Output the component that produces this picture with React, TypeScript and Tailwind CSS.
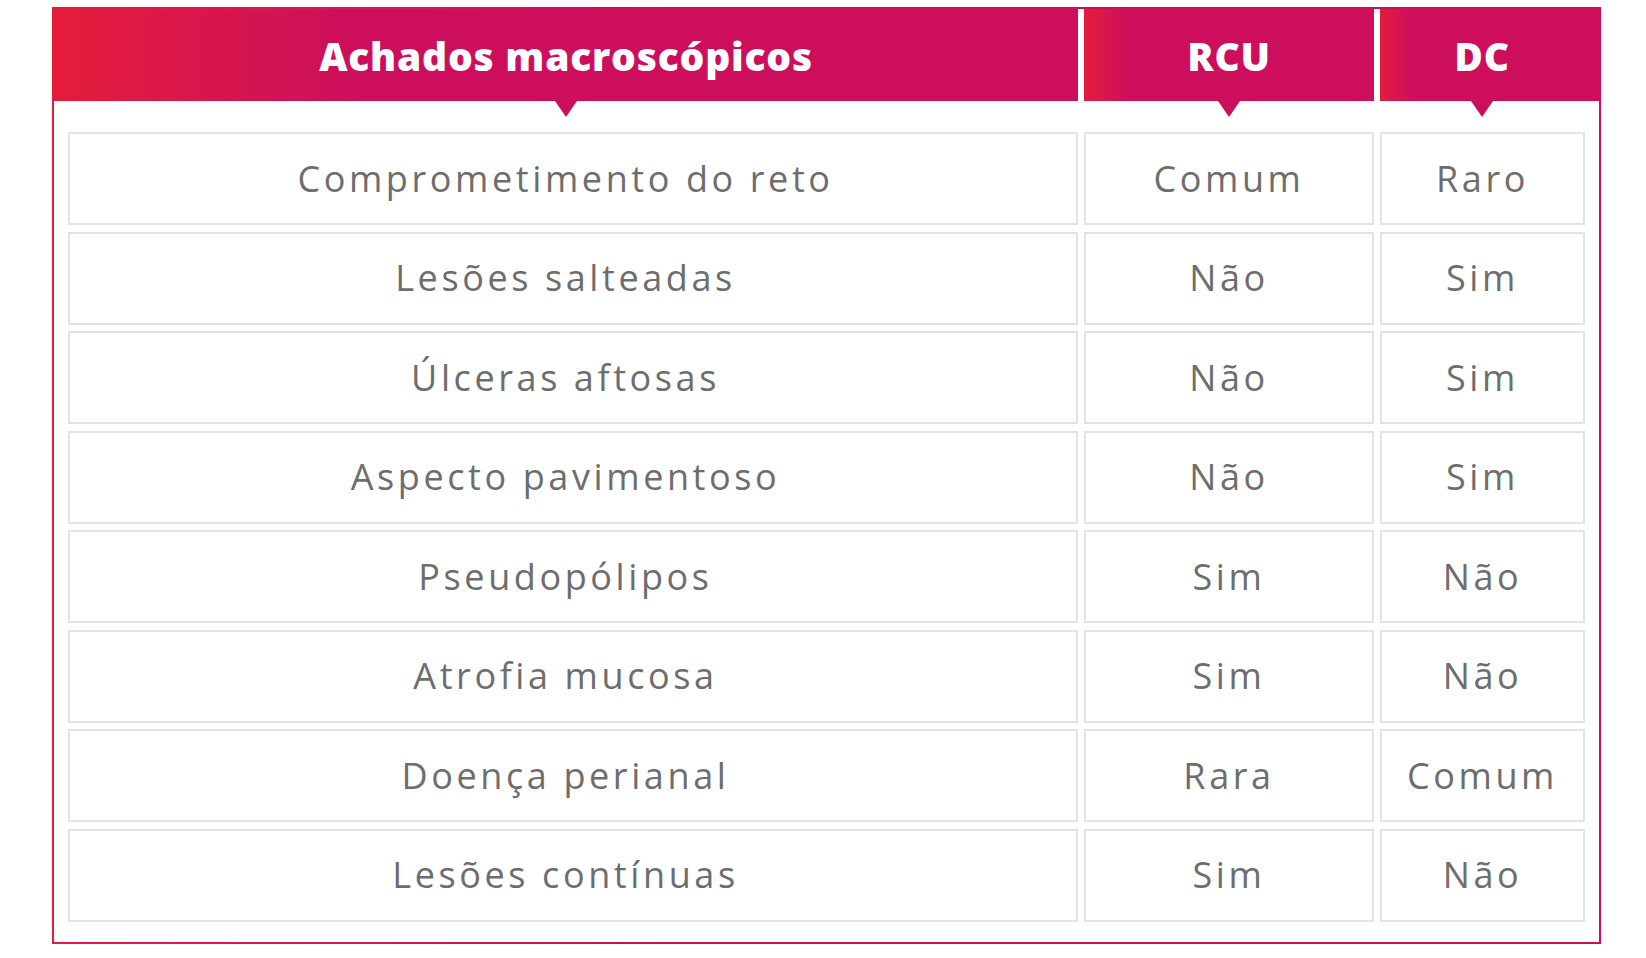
const rows = [
  ['Comprometimento do reto', 'Comum', 'Raro'],
  ['Lesões salteadas', 'Não', 'Sim'],
  ['Úlceras aftosas', 'Não', 'Sim'],
  ['Aspecto pavimentoso', 'Não', 'Sim'],
  ['Pseudopólipos', 'Sim', 'Não'],
  ['Atrofia mucosa', 'Sim', 'Não'],
  ['Doença perianal', 'Rara', 'Comum'],
  ['Lesões contínuas', 'Sim', 'Não'],
]

const HeaderCell = ({ label, stop, extraPad }) => (
  <div
    className={`${stop} ${extraPad} flex h-full bg-linear-to-r from-[#e41b3a] to-[#cc0e5c]`}
  >
    <div className="relative flex flex-1 items-center justify-center">
      <span className="text-[39px] font-extrabold leading-none tracking-[0.02em] text-white">
        {label}
      </span>
      <span className="absolute left-1/2 top-full -translate-x-1/2 border-x-[11px] border-t-[16px] border-x-transparent border-t-[#cc0e5c]" />
    </div>
  </div>
)

const BodyCell = ({ children, extraPad }) => (
  <div
    className={`${extraPad} flex h-[93px] items-center justify-center border-2 border-[#e3e3e3] bg-white`}
  >
    <span className="text-[36px] leading-none tracking-[0.1em] text-[#6d6d6d]">
      {children}
    </span>
  </div>
)

export default function App() {
  return (
    <div
      className="min-h-[958px] w-[1646px] bg-white pl-[52px] pt-[7px]"
      style={{ fontFamily: '"Open Sans", "Noto Sans", sans-serif' }}
    >
      <div className="w-[1549px] bg-linear-to-r from-[#e41b3a] to-[#cc0e5c] to-40% p-[2px]">
        <div className="flex flex-col bg-white">
          {/* header */}
          <div className="grid h-[92px] grid-cols-[1024px_290px_219px] gap-x-[6px]">
            <HeaderCell label="Achados macroscópicos" stop="to-30%" extraPad="" />
            <HeaderCell label="RCU" stop="to-15%" extraPad="" />
            <HeaderCell label="DC" stop="to-15%" extraPad="pr-[15px]" />
          </div>

          {/* body */}
          <div className="flex flex-col gap-[6.5px] px-[14px] pb-[20px] pt-[31px]">
            {rows.map((r, i) => (
              <div key={i} className="grid grid-cols-[1010px_290px_205px] gap-x-[6px]">
                <BodyCell extraPad="pr-[15px]">{r[0]}</BodyCell>
                <BodyCell extraPad="">{r[1]}</BodyCell>
                <BodyCell extraPad="">{r[2]}</BodyCell>
              </div>
            ))}
          </div>
        </div>
      </div>
    </div>
  )
}
